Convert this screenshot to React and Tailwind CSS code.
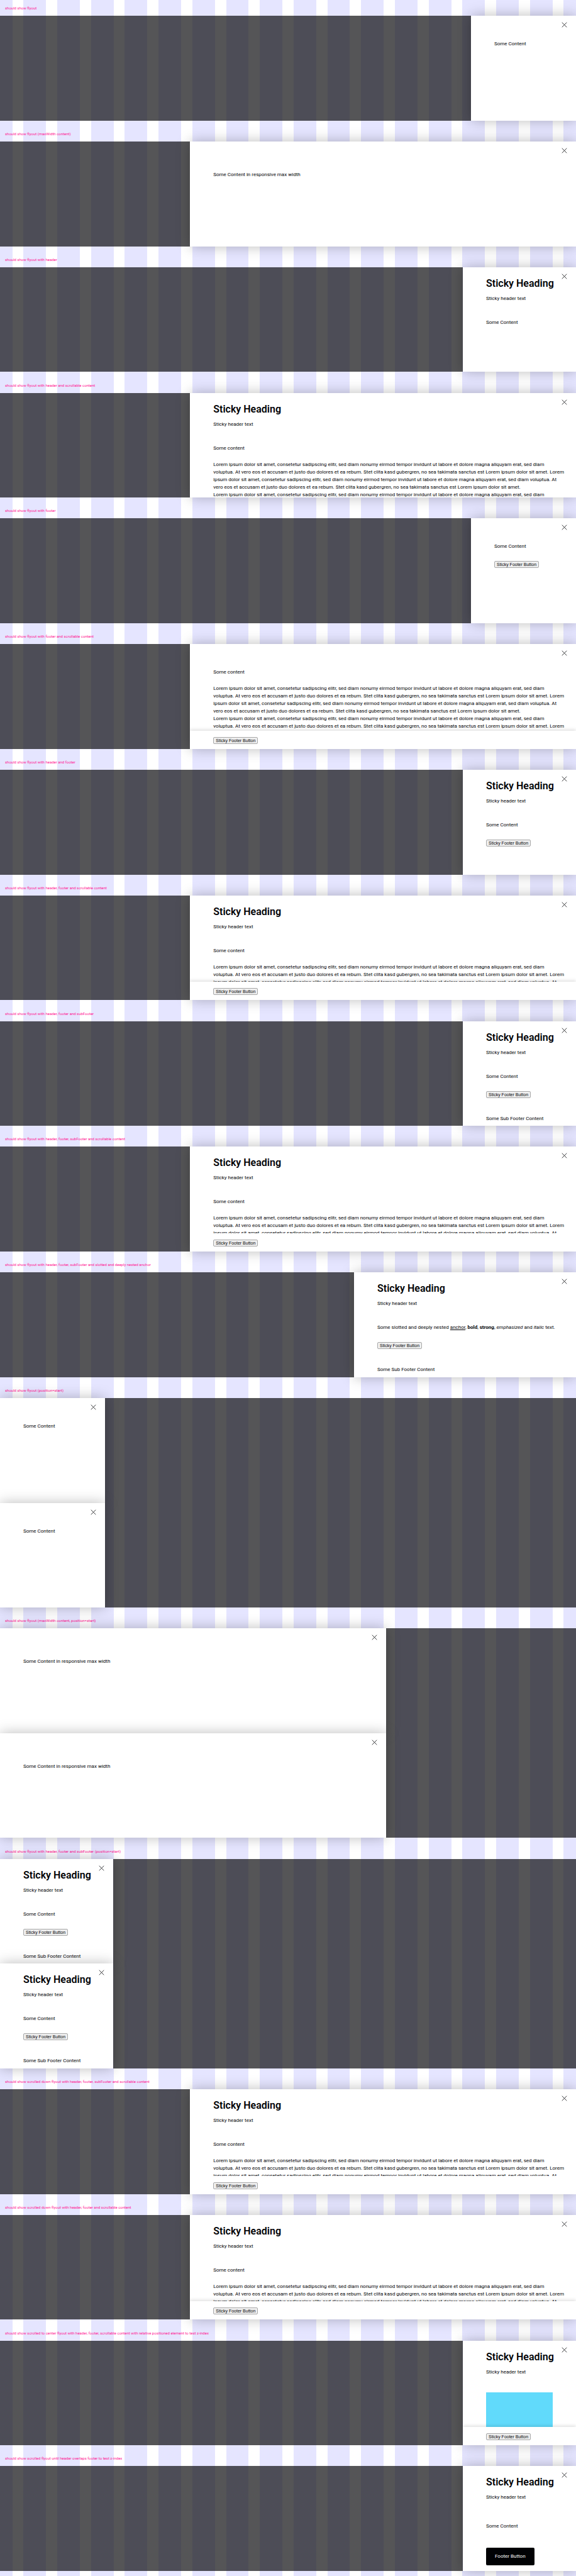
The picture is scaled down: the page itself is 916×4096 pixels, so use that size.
const LINES = [
  'Lorem ipsum dolor sit amet, consetetur sadipscing elitr, sed diam nonumy eirmod tempor invidunt ut labore et dolore magna aliquyam erat, sed diam',
  'voluptua. At vero eos et accusam et justo duo dolores et ea rebum. Stet clita kasd gubergren, no sea takimata sanctus est Lorem ipsum dolor sit amet. Lorem',
  'ipsum dolor sit amet, consetetur sadipscing elitr, sed diam nonumy eirmod tempor invidunt ut labore et dolore magna aliquyam erat, sed diam voluptua. At',
  'vero eos et accusam et justo duo dolores et ea rebum. Stet clita kasd gubergren, no sea takimata sanctus est Lorem ipsum dolor sit amet.',
];

const WIDTHS = {
  plain: 'w-[167px]',
  header: 'w-[180px]',
  rich: 'w-[353px]',
  wide: 'w-[67%]',
};

function CloseButton() {
  return (
    <button
      type="button"
      aria-label="Dismiss flyout"
      className="absolute top-[7px] right-[11px] z-10 flex size-[15px] items-center justify-center"
    >
      <svg viewBox="0 0 24 24" className="size-[13px]" fill="none" stroke="#010205" strokeWidth="1.4">
        <path d="M5 5 19 19M19 5 5 19" />
      </svg>
    </button>
  );
}

function Header() {
  return (
    <header className="shrink-0 px-[37px] pt-[15px] whitespace-nowrap">
      <h2 className="text-[16px] leading-[22px] font-semibold">Sticky Heading</h2>
      <p className="mt-[7px]">Sticky header text</p>
    </header>
  );
}

function FooterButton() {
  return (
    <button
      type="button"
      className="block h-[11px] rounded-[2px] border border-[#a8a8a8] bg-[#efefef] px-[3px] font-['Liberation_Sans',Arial,sans-serif] text-[7px] leading-[9px] whitespace-nowrap"
    >
      Sticky Footer Button
    </button>
  );
}

function Paragraphs({ count }) {
  return (
    <>
      <p>Some content</p>
      <p className="mt-[14px] whitespace-nowrap">
        {LINES.concat(LINES)
          .slice(0, count)
          .map((line, i) => (
            <span key={i} className="block">
              {line}
            </span>
          ))}
      </p>
    </>
  );
}

function RichText() {
  return (
    <p className="whitespace-nowrap">
      Some slotted and deeply nested{' '}
      <a href="#anchor" className="underline">
        anchor
      </a>
      , <b>bold</b>, <strong>strong</strong>, <em>emphasized</em> and <i>italic</i> text.
    </p>
  );
}

function Flyout({ kind, width, header, footer, sub, lines, start }) {
  const pinned = kind === 'scroll' || kind === 'block' || kind === 'max';
  const shaded = pinned && !sub;
  return (
    <aside
      className={
        'relative isolate flex min-h-0 flex-1 flex-col overflow-hidden bg-white shadow-[0_0_20px_rgba(0,0,0,0.27)] ' +
        (start ? 'self-start ' : 'self-end ') +
        WIDTHS[width]
      }
    >
      <CloseButton />
      {header && <Header />}
      <div
        className={
          'pl-[37px] ' +
          (pinned ? 'min-h-0 flex-1 overflow-hidden ' : 'shrink-0 ') +
          (kind === 'block' ? 'pr-[37px] ' : '') +
          (header ? 'pt-[26px]' : 'pt-[39px]')
        }
      >
        {kind === 'plain' && <p>Some Content</p>}
        {kind === 'black' && <p className="pt-2">Some Content</p>}
        {kind === 'max' && <p className="pt-2">Some Content in responsive max width</p>}
        {kind === 'scroll' && <Paragraphs count={lines} />}
        {kind === 'rich' && <RichText />}
        {kind === 'block' && <div className="h-full bg-[#61dafb]" />}
      </div>
      {kind === 'black' && (
        <footer className="px-[37px] pt-7">
          <button type="button" className="block h-7 rounded-[2px] bg-[#010205] px-[14px] whitespace-nowrap text-white">
            Footer Button
          </button>
        </footer>
      )}
      {(footer || shaded) && (
        <footer
          className={
            'relative px-[37px] ' +
            (pinned ? 'shrink-0 bg-white ' : 'pt-[17px] ') +
            (pinned && footer ? 'pt-[10px] pb-2 ' : '') +
            (shaded ? 'shadow-[0_-2px_5px_rgba(0,0,0,0.12)]' : '')
          }
        >
          {footer && <FooterButton />}
        </footer>
      )}
      {sub && !pinned && <p className="px-[37px] pt-[27px] whitespace-nowrap">Some Sub Footer Content</p>}
    </aside>
  );
}

const STORIES = [
  ['should show flyout', { kind: 'plain', width: 'plain' }],
  ['should show flyout (maxWidth content)', { kind: 'max', width: 'wide' }],
  ['should show flyout with header', { kind: 'plain', width: 'header', header: true }],
  ['should show flyout with header and scrollable content', { kind: 'scroll', width: 'wide', header: true, lines: 5 }],
  ['should show flyout with footer', { kind: 'plain', width: 'plain', footer: true }],
  ['should show flyout with footer and scrollable content', { kind: 'scroll', width: 'wide', footer: true, lines: 6 }],
  ['should show flyout with header and footer', { kind: 'plain', width: 'header', header: true, footer: true }],
  [
    'should show flyout with header, footer and scrollable content',
    { kind: 'scroll', width: 'wide', header: true, footer: true, lines: 3 },
  ],
  [
    'should show flyout with header, footer and subFooter',
    { kind: 'plain', width: 'header', header: true, footer: true, sub: true },
  ],
  [
    'should show flyout with header, footer, subFooter and scrollable content',
    { kind: 'scroll', width: 'wide', header: true, footer: true, sub: true, lines: 3 },
  ],
  [
    'should show flyout with header, footer, subFooter and slotted and deeply nested anchor',
    { kind: 'rich', width: 'rich', header: true, footer: true, sub: true },
  ],
  ['should show flyout (position=start)', { kind: 'plain', width: 'plain', start: true }],
  ['should show flyout (maxWidth content, position=start)', { kind: 'max', width: 'wide', start: true }],
  [
    'should show flyout with header, footer and subFooter (position=start)',
    { kind: 'plain', width: 'header', header: true, footer: true, sub: true, start: true },
  ],
  [
    'should show scrolled down flyout with header, footer, subFooter and scrollable content',
    { kind: 'scroll', width: 'wide', header: true, footer: true, sub: true, lines: 3 },
  ],
  [
    'should show scrolled down flyout with header, footer and scrollable content',
    { kind: 'scroll', width: 'wide', header: true, footer: true, lines: 3 },
  ],
  [
    'should show scrolled to center flyout with header, footer, scrollable content with relative positioned element to test z-index',
    { kind: 'block', width: 'header', header: true, footer: true },
  ],
  ['should show scrolled flyout until header overlaps footer to test z-index', { kind: 'black', width: 'header', header: true }],
];

export default function App() {
  return (
    <main className="flex min-h-screen flex-col overflow-hidden bg-[repeating-linear-gradient(90deg,#e5e5ff_0_2.159%,#fff_2.159%_4.091%,#e5e5ff_4.091%_5.8594%)] pb-2 font-[Roboto,sans-serif] text-[8px] leading-[12px] text-[#010205]">
      {STORIES.map(([title, props], i) => (
        <section key={title} className="flex shrink-0 grow flex-col">
          <h1
            className={
              'flex shrink-0 grow items-end px-2 text-[6px] leading-[25px] whitespace-nowrap text-[#ff1493] ' +
              (i === 0 ? 'basis-[25px]' : 'basis-[33px]')
            }
          >
            {title}
          </h1>
          <div className={'flex min-h-0 shrink-0 flex-col bg-[#010205]/67 ' + (props.start ? 'aspect-[11/4]' : 'aspect-[11/2]')}>
            <Flyout {...props} />
            {props.start && <Flyout {...props} />}
          </div>
        </section>
      ))}
    </main>
  );
}
